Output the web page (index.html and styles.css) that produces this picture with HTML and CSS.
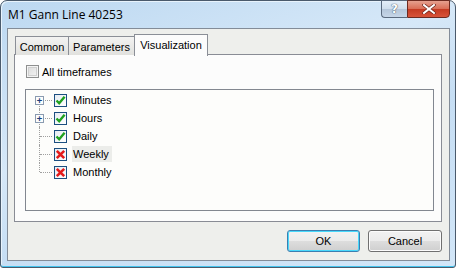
FILE: index.html
```html
<!DOCTYPE html>
<html>
<head>
<meta charset="utf-8">
<link rel="stylesheet" href="styles.css">
</head>
<body>
<div class="window">
  <div class="titlebar">
    <span class="title">M1 Gann Line 40253</span>
    <div class="caption-btns">
      <div class="cap help">?</div>
      <div class="cap close">
        <svg width="14" height="10" viewBox="0 0 14 10"><path d="M2 1 L12 9 M12 1 L2 9" stroke="#6b2218" stroke-width="3.4" stroke-linecap="square"/><path d="M2 1 L12 9 M12 1 L2 9" stroke="#ffffff" stroke-width="2" stroke-linecap="square"/></svg>
      </div>
    </div>
  </div>
  <div class="client">
    <div class="tabs">
      <div class="tab t-common">Common</div>
      <div class="tab t-params">Parameters</div>
      <div class="tab active">Visualization</div>
    </div>
    <div class="panel">
      <div class="check-row"><span class="cb"></span><span>All timeframes</span></div>
      <div class="tree">
        <div class="node first">
          <span class="guide"><span class="expander">+</span></span>
          <span class="tcb"><svg width="13" height="13" viewBox="0 0 13 13"><path d="M2.5 6.5 L5.2 9.3 L10.6 2.8" fill="none" stroke="#1fa11f" stroke-width="2.4"/></svg></span>
          <span class="label">Minutes</span>
        </div>
        <div class="node">
          <span class="guide"><span class="expander">+</span></span>
          <span class="tcb"><svg width="13" height="13" viewBox="0 0 13 13"><path d="M2.5 6.5 L5.2 9.3 L10.6 2.8" fill="none" stroke="#1fa11f" stroke-width="2.4"/></svg></span>
          <span class="label">Hours</span>
        </div>
        <div class="node">
          <span class="guide"></span>
          <span class="tcb"><svg width="13" height="13" viewBox="0 0 13 13"><path d="M2.5 6.5 L5.2 9.3 L10.6 2.8" fill="none" stroke="#1fa11f" stroke-width="2.4"/></svg></span>
          <span class="label">Daily</span>
        </div>
        <div class="node">
          <span class="guide"></span>
          <span class="tcb"><svg width="13" height="13" viewBox="0 0 13 13"><path d="M2.8 2.8 L10.2 10.2 M10.2 2.8 L2.8 10.2" fill="none" stroke="#e41c1c" stroke-width="2.6"/></svg></span>
          <span class="label hot">Weekly</span>
        </div>
        <div class="node last">
          <span class="guide"></span>
          <span class="tcb"><svg width="13" height="13" viewBox="0 0 13 13"><path d="M2.8 2.8 L10.2 10.2 M10.2 2.8 L2.8 10.2" fill="none" stroke="#e41c1c" stroke-width="2.6"/></svg></span>
          <span class="label">Monthly</span>
        </div>
      </div>
    </div>
    <div class="buttons">
      <button class="btn default">OK</button>
      <button class="btn">Cancel</button>
    </div>
  </div>
</div>
</body>
</html>
```

FILE: styles.css
```css
html, body {
  margin: 0;
  padding: 0;
  background: #ffffff;
}
body {
  font-family: "Liberation Sans", Arial, sans-serif;
  font-size: 11px;
  color: #000;
}
.window {
  box-sizing: border-box;
  width: 456px;
  height: 268px;
  border: 1px solid #4a5a6c;
  border-radius: 7px 7px 3px 3px;
  background: linear-gradient(160deg, #bcd8f1 0%, #d6e8f8 40%, #c6def4 60%, #d2e6f8 100%);
  padding: 0 5px 6px 6px;
  display: flex;
  flex-direction: column;
  box-shadow: inset 0 -1px 0 #43c3ee, inset 1px 1px 0 #e8f3fc;
}
.titlebar {
  height: 27px;
  display: flex;
  justify-content: space-between;
  align-items: flex-start;
}
.title {
  font-family: "Open Sans", "Liberation Sans", sans-serif;
  font-size: 12px;
  line-height: 27px;
  padding-left: 1px;
  color: #000;
}
.caption-btns {
  display: flex;
  margin-top: -1px;
}
.cap {
  box-sizing: border-box;
  height: 18px;
  border: 1px solid #5a6a7e;
  display: flex;
  align-items: center;
  justify-content: center;
}
.help {
  width: 26px;
  border-right: none;
  border-radius: 0 0 0 4px;
  background: linear-gradient(#e3eef9 0%, #cfdeed 50%, #b4c6da 51%, #c6d6e8 100%);
  font-family: "DejaVu Sans", sans-serif;
  font-size: 12px;
  font-weight: bold;
  color: #ffffff;
  text-shadow: 0 0 1px #3d4d60, 0 0 1px #3d4d60;
}
.close {
  width: 43px;
  border-radius: 0 0 4px 0;
  background: linear-gradient(#e6a08f 0%, #d96c55 50%, #c43a22 51%, #d8543a 100%);
  border-color: #6d2a20;
}
.close svg { display: block; }
.client {
  flex: 1;
  border: 1px solid #838c98;
  background: #eeefec;
  display: flex;
  flex-direction: column;
  padding: 5px 7px 0 6px;
}
.tabs {
  display: flex;
  height: 21px;
  padding-left: 1px;
  position: relative;
  z-index: 1;
  margin-bottom: -1px;
}
.tab {
  box-sizing: border-box;
  height: 19px;
  margin-top: 2px;
  border: 1px solid #8b8f97;
  border-bottom: none;
  background: linear-gradient(#f3f3f2, #e1e1de);
  padding: 3px 0 0 0;
  text-align: center;
  line-height: 14px;
}
.t-common { width: 54px; }
.t-params { width: 66px; border-left: none; }
.tab.active {
  width: 74px;
  height: 22px;
  margin-top: 0;
  margin-left: -1px;
  background: #fcfcfc;
  padding-top: 3px;
}
.panel {
  box-sizing: border-box;
  height: 168px;
  border: 1px solid #898c95;
  background: #fcfcfc;
  padding: 10px 7px 0 11px;
}
.check-row {
  display: flex;
  align-items: center;
  height: 13px;
  gap: 3px;
}
.cb {
  box-sizing: border-box;
  width: 13px;
  height: 13px;
  border: 1px solid #8e8f8f;
  background: linear-gradient(135deg, #d9d9d9, #f6f6f6);
  box-shadow: inset 0 0 0 1px #f4f4f4, inset 0 0 0 2px #cfcfcf;
}
.tree {
  box-sizing: border-box;
  margin-top: 11px;
  margin-left: -1px;
  height: 122px;
  border: 1px solid #828790;
  background: #fdfdfb;
  padding-top: 1px;
}
.node {
  display: flex;
  align-items: center;
  height: 18px;
}
.guide {
  position: relative;
  width: 28px;
  height: 18px;
  flex: none;
}
.guide::before {
  content: "";
  position: absolute;
  left: 13px;
  top: 0;
  bottom: 0;
  border-left: 1px dotted #a0a0a0;
}
.first .guide::before { top: 9px; }
.last .guide::before { bottom: 9px; }
.guide::after {
  content: "";
  position: absolute;
  left: 14px;
  right: 2px;
  top: 9px;
  border-top: 1px dotted #a0a0a0;
}
.expander {
  position: absolute;
  left: 9px;
  top: 5px;
  z-index: 1;
  box-sizing: border-box;
  width: 9px;
  height: 9px;
  border: 1px solid #8a9bb0;
  background: #fdfdfd;
  color: #1d3f7a;
  font-family: "DejaVu Sans Mono", monospace;
  font-size: 9px;
  font-weight: bold;
  line-height: 7px;
  text-align: center;
}
.tcb {
  box-sizing: border-box;
  width: 13px;
  height: 13px;
  border: 1px solid #1c4f80;
  background: linear-gradient(135deg, #e6ecf2, #ffffff);
  flex: none;
  display: flex;
}
.tcb svg {
  margin: -1px;
  display: block;
}
.label {
  margin-left: 5px;
  padding: 0 2px 0 1px;
  line-height: 14px;
}
.label.hot { background: #ecedea; padding: 1px 3px 1px 1px; }
.buttons {
  display: flex;
  justify-content: flex-end;
  gap: 8px;
  margin-top: 8px;
}
.btn {
  box-sizing: border-box;
  width: 73px;
  height: 22px;
  border: 1px solid #707070;
  border-radius: 3px;
  background: linear-gradient(#f2f2f2 0%, #ebebeb 50%, #dddddd 51%, #cfcfcf 100%);
  box-shadow: inset 0 0 0 1px #fcfcfc;
  font-family: "Liberation Sans", Arial, sans-serif;
  font-size: 11px;
  color: #000;
  padding: 0;
}
.btn.default {
  border-color: #3c7fb1;
  box-shadow: inset 0 0 0 1px #48d8fb;
}
.btn + .btn { width: 74px; }
```
